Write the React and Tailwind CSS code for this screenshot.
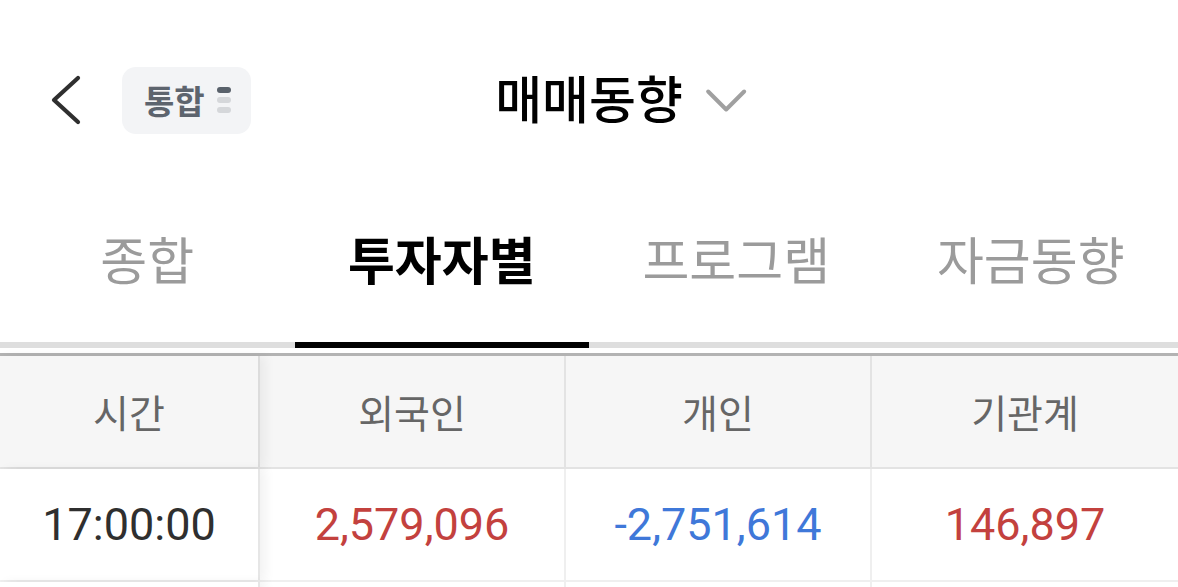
const tabs = ["종합", "투자자별", "프로그램", "자금동향"];

const rows = [
  { time: "17:00:00", foreign: "2,579,096", personal: "-2,751,614", inst: "146,897" },
];

const tone = (v) => (v.startsWith("-") ? "text-[#3f78d9]" : "text-[#c3413e]");

const BackIcon = () => (
  <svg width="32" height="50" viewBox="0 0 32 50" fill="none">
    <polyline
      points="28,3 4,25 28,47"
      stroke="#2f2f2f"
      strokeWidth="4.2"
      strokeLinecap="round"
      strokeLinejoin="round"
    />
  </svg>
);

const DropIcon = () => (
  <svg width="42" height="26" viewBox="0 0 42 26" fill="none">
    <polyline
      points="3,4 21,22 39,4"
      stroke="#a0a0a0"
      strokeWidth="4"
      strokeLinecap="round"
      strokeLinejoin="round"
    />
  </svg>
);

const App = () => {
  return (
    <div className="w-[1178px] h-[587px] overflow-hidden bg-white font-['Noto_Sans_CJK_KR','Noto_Sans',sans-serif]">
      {/* Top bar */}
      <div className="relative flex items-center h-[194px] pl-[50px] pt-[6px]">
        <button className="flex items-center justify-center w-[32px] h-[50px]">
          <BackIcon />
        </button>
        <div className="ml-[40px] flex items-center gap-[12px] h-[67px] pl-[22px] pr-[20px] rounded-[14px] bg-[#f3f4f6]">
          <span className="text-[33px] font-bold text-[#5d646e] leading-none">통합</span>
          <div className="flex flex-col gap-[4px]">
            <span className="block w-[14px] h-[6px] rounded-full bg-[#59616b]" />
            <span className="block w-[14px] h-[6px] rounded-full bg-[#d5d7da]" />
            <span className="block w-[14px] h-[6px] rounded-full bg-[#d5d7da]" />
          </div>
        </div>
        <div className="absolute left-1/2 top-1/2 -translate-x-1/2 -translate-y-1/2">
          <div className="relative">
            <h1 className="text-[51px] font-medium text-black leading-none">매매동향</h1>
            <div className="absolute left-full top-1/2 -translate-y-1/2 ml-[22px] mt-[3px]">
              <DropIcon />
            </div>
          </div>
        </div>
      </div>

      {/* Tabs */}
      <div className="grid grid-cols-4">
        {tabs.map((t, i) => (
          <div key={t} className="flex flex-col">
            <div
              className={`flex items-center justify-center h-[148px] pb-[20px] text-[51px] leading-none ${
                i === 1 ? "font-bold text-black" : "text-[#9b9b9b]"
              }`}
            >
              {t}
            </div>
            <div className={`h-[6px] ${i === 1 ? "bg-black" : "bg-[#dedede]"}`} />
          </div>
        ))}
      </div>

      {/* Table */}
      <div className="mt-[5px] border-t-[3px] border-[#b3b3b3]">
        <div className="grid grid-cols-[260px_1fr_1fr_1fr] h-[113px] bg-[#f6f6f6] border-b-2 border-[#e3e3e3] text-[39px] text-[#666]">
          <div className="relative z-10 flex items-center justify-center border-r-2 border-[#dcdcdc] shadow-[6px_0_10px_rgba(0,0,0,0.05)]">시간</div>
          <div className="flex items-center justify-center border-r-2 border-[#e3e3e3]">외국인</div>
          <div className="flex items-center justify-center border-r-2 border-[#e3e3e3]">개인</div>
          <div className="flex items-center justify-center">기관계</div>
        </div>
        {rows.map((r) => (
          <div
            key={r.time}
            className="grid grid-cols-[260px_1fr_1fr_1fr] h-[113px] border-b-2 border-[#efefef] text-[45px] font-['Roboto',sans-serif]"
          >
            <div className="relative z-10 flex items-center justify-center bg-white border-r-2 border-[#e6e6e6] shadow-[6px_0_10px_rgba(0,0,0,0.05)] text-[#2f2f2f]">
              {r.time}
            </div>
            <div className={`flex items-center justify-center border-r-2 border-[#efefef] ${tone(r.foreign)}`}>{r.foreign}</div>
            <div className={`flex items-center justify-center border-r-2 border-[#efefef] ${tone(r.personal)}`}>{r.personal}</div>
            <div className={`flex items-center justify-center ${tone(r.inst)}`}>{r.inst}</div>
          </div>
        ))}
        <div className="grid grid-cols-[260px_1fr_1fr_1fr] h-[40px]">
          <div className="relative z-10 bg-white border-r-2 border-[#e6e6e6] shadow-[6px_0_10px_rgba(0,0,0,0.05)]" />
          <div className="border-r-2 border-[#efefef]" />
          <div className="border-r-2 border-[#efefef]" />
          <div />
        </div>
      </div>
    </div>
  );
};

export default App;
